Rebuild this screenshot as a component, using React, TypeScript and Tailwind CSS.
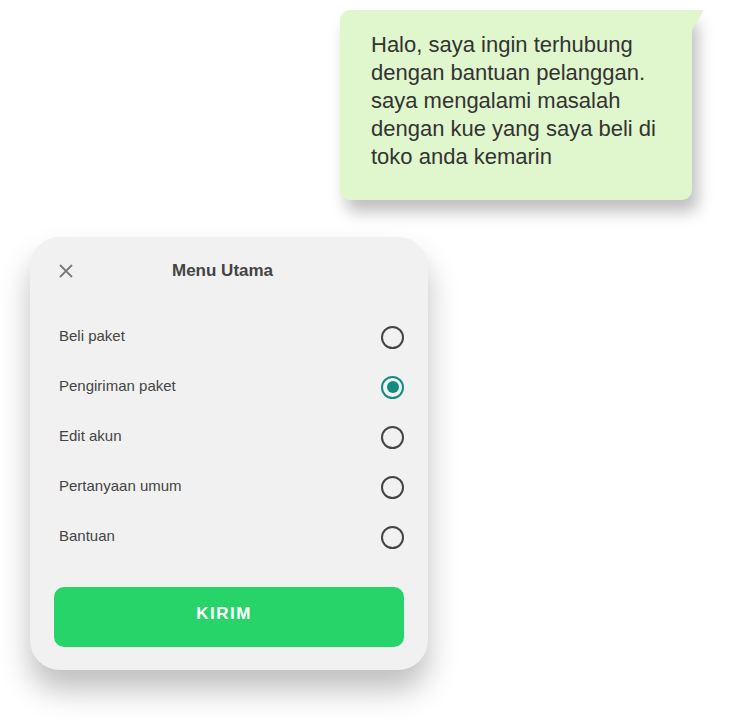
import React, { useState } from 'react';

const options = ['Beli paket', 'Pengiriman paket', 'Edit akun', 'Pertanyaan umum', 'Bantuan'];

const Radio: React.FC<{ checked: boolean }> = ({ checked }) => (
  <span
    className={`flex h-[23px] w-[23px] items-center justify-center rounded-full border-2 ${
      checked ? 'border-[#128c7e]' : 'border-[#444444]'
    }`}
  >
    {checked && <span className="h-[12px] w-[12px] rounded-full bg-[#128c7e]" />}
  </span>
);

const App: React.FC = () => {
  const [selected, setSelected] = useState(1);

  return (
    <div className="min-h-[722px] w-[734px] bg-white font-['Liberation_Sans',Arial,sans-serif]">
      <div className="pt-[10px] pl-[340px]">
        <div className="relative w-[352px] rounded-[10px] rounded-tr-none bg-[#e0f6cc] pt-[21px] pb-[29px] pl-[31px] pr-[20px] shadow-[6px_12px_16px_rgba(0,0,0,0.25)]">
          <p className="text-[22px] leading-[28px] text-[#333333]">
            Halo, saya ingin terhubung dengan bantuan pelanggan. saya mengalami masalah dengan kue yang saya beli di toko anda kemarin
          </p>
          <svg className="absolute top-0 right-[-12px]" width="12" height="20" viewBox="0 0 12 20">
            <path d="M0 0 H10.5 Q12 0 11 1.5 L0 20 Z" fill="#e0f6cc" />
          </svg>
        </div>
      </div>

      <div className="mt-[37px] ml-[30px] w-[398px] rounded-[30px] bg-[#f1f1f1] px-[24px] pt-[22px] pb-[23px] shadow-[0_20px_30px_rgba(0,0,0,0.25)]">
        <div className="flex h-[24px] items-center pl-[5px]">
          <button className="flex h-[14px] w-[14px] items-center justify-center">
            <svg width="14" height="14" viewBox="0 0 14 14" fill="none" stroke="#7a7a7a" strokeWidth="1.8">
              <path d="M1 1 L13 13 M13 1 L1 13" />
            </svg>
          </button>
          <h2 className="ml-[99px] text-[17px] font-bold text-[#444444]">Menu Utama</h2>
        </div>

        <ul className="mt-[29px]">
          {options.map((label, i) => (
            <li
              key={label}
              onClick={() => setSelected(i)}
              className="flex h-[50px] cursor-pointer items-center justify-between pl-[5px]"
            >
              <span className="mb-[2px] text-[15px] text-[#444444]">{label}</span>
              <Radio checked={selected === i} />
            </li>
          ))}
        </ul>

        <button className="mt-[25px] h-[60px] w-full rounded-[10px] bg-[#26d46a] pr-[10px] pb-[6px] text-[17px] font-bold tracking-[1.5px] text-white">
          KIRIM
        </button>
      </div>
    </div>
  );
};

export default App;
